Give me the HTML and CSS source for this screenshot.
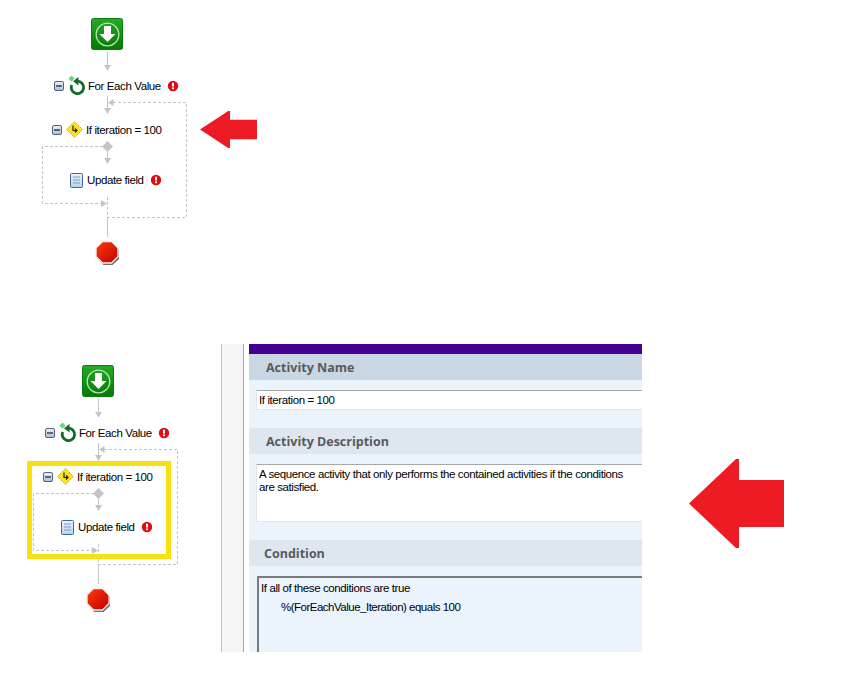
FILE: index.html
```html
<!DOCTYPE html>
<html lang="en">
<head>
<meta charset="utf-8">
<title>Workflow</title>
<link rel="stylesheet" href="styles.css">
</head>
<body>
<svg class="defs" width="0" height="0" aria-hidden="true">
  <defs>
    <linearGradient id="gs" x1="0" y1="0" x2="0" y2="1"><stop offset="0" stop-color="#27a927"/><stop offset="1" stop-color="#057a05"/></linearGradient>
    <linearGradient id="gr" x1="0" y1="0" x2="1" y2="1"><stop offset="0" stop-color="#ff3a08"/><stop offset="1" stop-color="#c00000"/></linearGradient>
    <linearGradient id="gb" x1="0" y1="0" x2="0" y2="1"><stop offset="0" stop-color="#f0f4fa"/><stop offset="1" stop-color="#a9bcd6"/></linearGradient>
    <linearGradient id="gd" x1="0" y1="0" x2="0" y2="1"><stop offset="0" stop-color="#eaf2fc"/><stop offset="1" stop-color="#bcd3ee"/></linearGradient>
    <g id="minus">
      <rect x=".5" y=".5" width="9" height="9" rx="1.5" fill="url(#gb)" stroke="#51637e"/>
      <path d="M2 5h6" stroke="#26364f" stroke-width="1.400"/>
    </g>
    <g id="err">
      <circle r="5.200" fill="#e00c12"/>
      <path d="M0-3.200v3.600" stroke="#fff" stroke-width="2"/>
      <rect x="-1" y="1.400" width="2" height="1.800" fill="#fff"/>
    </g>
    <symbol id="flow" viewBox="0 0 192 270">
      <g fill="none" stroke="#c4c4c4" stroke-width="1">
        <path d="M98.500 52V65M98.500 96V108M98.500 152V158M98.500 217V237"/>
        <path stroke-dasharray="3 2" d="M104 102.500H177.500V217.500H99M94 146.500H33.500V203.500H93M98.500 197V217"/>
      </g>
      <g fill="#c4c4c4">
        <path d="M95 65h7l-3.500 5.500zM95 108h7l-3.500 6zM95 158h7l-3.500 6zM104.500 99v7l-5.500-3.500zM92 200v7l6-3.500z"/>
        <path d="M98.500 141l5.500 5.500-5.500 5.500-5.500-5.500z"/>
      </g>
      <rect x="82.500" y="18.500" width="31" height="31" rx="2" fill="url(#gs)" stroke="#0b7d0b"/>
      <circle cx="98.500" cy="34.500" r="11.300" fill="none" stroke="#b9e2b9" stroke-width="1.300"/>
      <path d="M95 26h7v8h4.500l-8 8-8-8H95z" fill="#fff"/>
      <use href="#minus" x="45" y="81"/>
      <path d="M68.500 81.200A6.200 6.200 0 1 1 62.700 85" fill="none" stroke="#12692b" stroke-width="2.800"/>
      <path d="M69.500 77v8.500l-5.500-4.200z" fill="#12692b"/>
      <path d="M62.500 76l2.600 2.600-2.600 2.600-2.600-2.600z" fill="#58e66c" stroke="#3aa84e" stroke-width=".5"/>
      <use href="#err" x="164" y="86"/>
      <use href="#minus" x="43" y="125"/>
      <path d="M65.500 121.500l8 8-8 8-8-8z" fill="#ffe122" stroke="#cda90f" stroke-dasharray="1.500 1"/>
      <path d="M64 125.500v5h3.500M66 128.500l2 2-2 2" fill="none" stroke="#222" stroke-width="1.200"/>
      <rect x="61.500" y="173.500" width="12" height="14" rx="1" fill="url(#gd)" stroke="#41689c"/>
      <path d="M64 177h7M64 180h7M64 183h7" stroke="#7f9dc4"/>
      <use href="#err" x="147" y="180"/>
      <path d="M94 243h9l7 7v9l-6.500 6h-9l-6.500-6.500V250z" fill="#6e6e6e"/>
      <path d="M93.500 241.500h9l6.500 6.500v8.500l-6.500 6.500h-9l-6.500-6.500V248z" fill="url(#gr)" stroke="#f2f2f2" stroke-width="1.300"/>
    </symbol>
    <symbol id="arrow" viewBox="0 0 95 89" preserveAspectRatio="none">
      <path d="M0 44.500L47 0h3v21h45v47H50v21h-3z" fill="#ed1c24"/>
    </symbol>
  </defs>
</svg>

<div class="row row-top">
  <div class="diagram">
    <svg class="flow"><use href="#flow"/></svg>
    <span class="label l-each">For Each Value</span>
    <span class="label l-if">If iteration = 100</span>
    <span class="label l-upd">Update field</span>
  </div>
  <svg class="arrow arrow-small"><use href="#arrow"/></svg>
</div>

<div class="row row-bottom">
  <div class="diagram diagram-low">
    <svg class="flow"><use href="#flow"/></svg>
    <span class="label l-each">For Each Value</span>
    <span class="label l-if">If iteration = 100</span>
    <span class="label l-upd">Update field</span>
    <div class="highlight"></div>
  </div>

  <div class="panel">
    <div class="gutter"></div>
    <div class="content">
      <div class="topbar"></div>
      <div class="head head-first">Activity Name</div>
      <div class="body">
        <div class="field field-name">If iteration = 100</div>
      </div>
      <div class="head">Activity Description</div>
      <div class="body">
        <div class="field field-desc">A sequence activity that only performs the contained activities if the conditions are satisfied.</div>
      </div>
      <div class="head head-cond">Condition</div>
      <div class="body body-cond">
        <div class="cond">
          <div>If all of these conditions are true</div>
          <div class="cond-rule">%(ForEachValue_Iteration) equals 100</div>
        </div>
      </div>
    </div>
  </div>

  <svg class="arrow arrow-large"><use href="#arrow"/></svg>
</div>
</body>
</html>
```
FILE: styles.css
```css
html, body {
  margin: 0;
  padding: 0;
  background: #fff;
}
body {
  width: 844px;
  height: 686px;
  overflow: hidden;
  font-family: "Liberation Sans", Arial, sans-serif;
  color: #000;
}
.defs {
  position: absolute;
}
.row {
  display: flex;
  align-items: flex-start;
}
.row-top {
  height: 344px;
  padding-left: 9px;
}
.row-bottom {
  height: 342px;
}
.diagram {
  position: relative;
  flex: none;
  width: 192px;
  height: 270px;
}
.diagram-low {
  margin-top: 3px;
}
.flow {
  display: block;
  width: 192px;
  height: 270px;
}
.label {
  position: absolute;
  font-size: 11.5px;
  line-height: 14px;
  letter-spacing: -0.4px;
  white-space: nowrap;
}
.l-each { left: 79px; top: 79px; }
.l-if { left: 77px; top: 123px; }
.l-upd { left: 78px; top: 173px; }
.highlight {
  position: absolute;
  left: 27px;
  top: 114px;
  width: 134px;
  height: 88px;
  border: 5px solid #f9e10f;
}
.arrow {
  flex: none;
  display: block;
}
.arrow-small {
  width: 57px;
  height: 37px;
  margin-top: 111px;
  margin-left: -1px;
}
.arrow-large {
  width: 95px;
  height: 89px;
  margin-top: 115px;
  margin-left: 47px;
}
.panel {
  flex: none;
  display: flex;
  width: 421px;
  height: 308px;
  margin-left: 29px;
  overflow: hidden;
  box-sizing: border-box;
  border-left: 1px solid #c4c4c4;
}
.gutter {
  flex: none;
  width: 21px;
  background: #f5f5f5;
  border-right: 1px solid #a3a3a3;
  margin-right: 5px;
}
.content {
  flex: 1;
  min-width: 0;
  background: #ebf3fd;
  overflow: hidden;
}
.topbar {
  height: 10px;
  background: #440091;
}
.head {
  height: 26px;
  padding-left: 17px;
  background: #dee6ef;
  font-family: "Open Sans", sans-serif;
  font-weight: 700;
  font-size: 12.5px;
  line-height: 27px;
  color: #5a5a5a;
}
.head-first {
  background: #c9d6e3;
}
.head-cond {
  padding-left: 15px;
}
.body {
  padding: 10px 0 18px 7px;
}
.field {
  box-sizing: border-box;
  width: 410px;
  background: #fff;
  border: 1px solid #e1e7ef;
  border-top-color: #a8a8a8;
  font-size: 11.5px;
  letter-spacing: -0.4px;
  line-height: 13px;
  padding: 3px 2px 0;
}
.field-name {
  height: 20px;
}
.field-desc {
  height: 58px;
  padding-right: 30px;
}
.body-cond {
  padding-bottom: 0;
  padding-left: 8px;
}
.cond {
  box-sizing: border-box;
  width: 410px;
  height: 90px;
  border: 2px solid #7b7b7b;
  border-right: 0;
  padding: 3px 2px;
  font-size: 11.5px;
  letter-spacing: -0.4px;
  line-height: 14px;
}
.cond-rule {
  margin-top: 5px;
  margin-left: 20px;
  letter-spacing: -0.5px;
}
```
